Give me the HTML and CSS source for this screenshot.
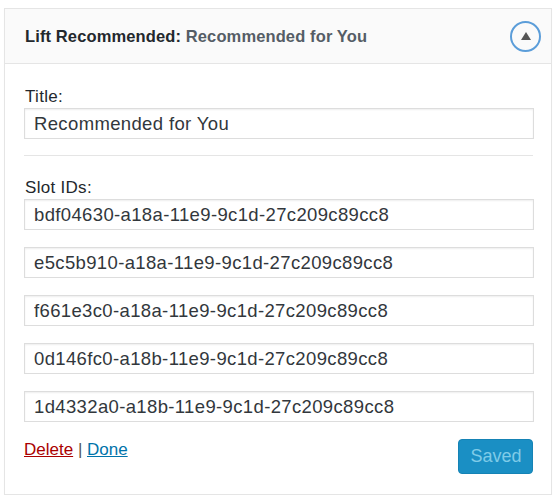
FILE: index.html
```
<!DOCTYPE html>
<html>
<head>
<meta charset="utf-8">
<link rel="stylesheet" href="styles.css">
</head>
<body>
<div class="widget">
  <div class="widget-top">
    <h3 class="widget-title">Lift Recommended: <span class="in-title">Recommended for You</span></h3>
    <button class="toggle" aria-label="Toggle"><span class="tri"></span></button>
  </div>
  <div class="widget-inside">
    <label class="field-label">Title:</label>
    <input class="text-input" type="text" value="Recommended for You">
    <div class="divider"></div>
    <label class="field-label slot-label">Slot IDs:</label>
    <div class="slots">
      <input class="text-input" type="text" value="bdf04630-a18a-11e9-9c1d-27c209c89cc8">
      <input class="text-input" type="text" value="e5c5b910-a18a-11e9-9c1d-27c209c89cc8">
      <input class="text-input" type="text" value="f661e3c0-a18a-11e9-9c1d-27c209c89cc8">
      <input class="text-input" type="text" value="0d146fc0-a18b-11e9-9c1d-27c209c89cc8">
      <input class="text-input" type="text" value="1d4332a0-a18b-11e9-9c1d-27c209c89cc8">
    </div>
    <div class="actions">
      <div class="links"><a class="delete" href="#">Delete</a> <span class="sep">|</span> <a class="done" href="#">Done</a></div>
      <button class="saved" disabled>Saved</button>
    </div>
  </div>
</div>
</body>
</html>
```
FILE: styles.css
```
html, body {
  margin: 0;
  padding: 0;
  background: #ffffff;
}
body {
  font-family: "Liberation Sans", Arial, sans-serif;
  color: #32373c;
}
.widget {
  margin: 8px 0 0 4px;
  width: 546px;
  border: 1px solid #e5e5e5;
  box-shadow: 0 1px 1px rgba(0,0,0,0.04);
  background: #fff;
}
.widget-top {
  height: 54px;
  background: #fafafa;
  border-bottom: 1px solid #e5e5e5;
  display: flex;
  align-items: center;
  justify-content: space-between;
  padding: 0 10px 0 20px;
}
.widget-title {
  margin: 0;
  font-size: 16.5px;
  font-weight: bold;
  color: #23282d;
  letter-spacing: 0.12px;
}
.in-title {
  color: #555d66;
}
.toggle {
  width: 31px;
  height: 31px;
  border-radius: 50%;
  border: 2px solid #5b9dd9;
  background: #fafafa;
  padding: 0;
  display: flex;
  align-items: center;
  justify-content: center;
  margin-top: 1px;
}
.tri {
  width: 0;
  height: 0;
  border-left: 5px solid transparent;
  border-right: 5px solid transparent;
  border-bottom: 8px solid #555;
  margin-top: -1px;
}
.widget-inside {
  padding: 22px 18px 20px 19px;
}
.field-label {
  display: block;
  font-size: 17px;
  line-height: 22px;
  color: #23282d;
  letter-spacing: 0.3px;
  padding-left: 1px;
}
.text-input {
  display: block;
  box-sizing: border-box;
  width: 510px;
  height: 31px;
  margin: 0;
  padding: 0 9px;
  border: 1px solid #dddddd;
  box-shadow: inset 0 1px 2px rgba(0,0,0,0.07);
  font-family: "Liberation Sans", Arial, sans-serif;
  font-size: 18.5px;
  color: #32373c;
  letter-spacing: 0.36px;
  background: #fff;
}
.divider {
  height: 1px;
  background: #e5e5e5;
  margin: 16px 0 21px;
}
.slots {
  display: flex;
  flex-direction: column;
  gap: 17px;
}
.actions {
  margin-top: 17px;
  display: flex;
  justify-content: space-between;
  align-items: flex-start;
}
.links {
  font-size: 17px;
  line-height: 22px;
  color: #555;
}
.delete {
  color: #a00;
  text-decoration: underline;
}
.done {
  color: #0073aa;
  text-decoration: underline;
}
.sep {
  color: #555;
}
.saved {
  width: 75px;
  height: 35px;
  background: #1a8fc4;
  border: 1px solid #1583b5;
  border-radius: 4px;
  color: #7fcbe8;
  font-family: "Liberation Sans", Arial, sans-serif;
  font-size: 18px;
  padding: 0 0 0 1px;
}
```
